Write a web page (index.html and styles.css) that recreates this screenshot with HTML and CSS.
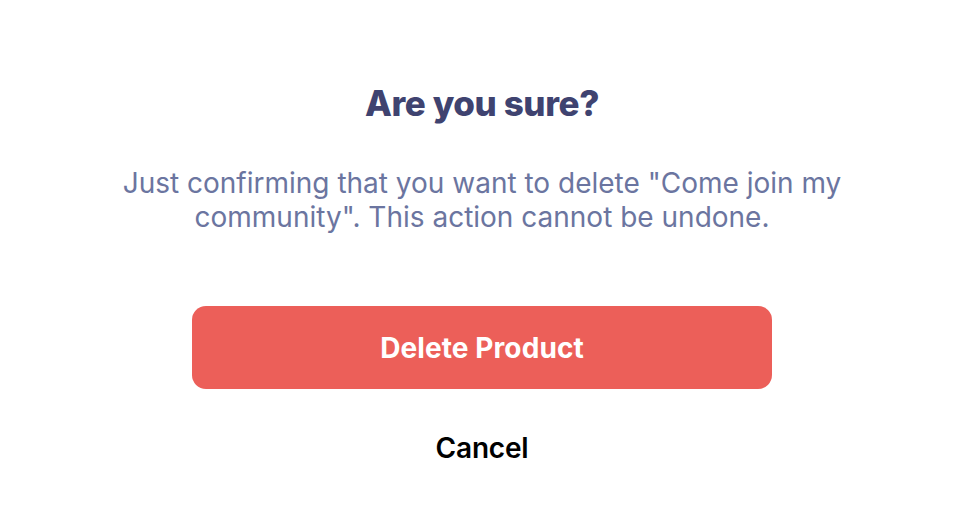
FILE: index.html
```html
<!DOCTYPE html>
<html lang="en">
<head>
<meta charset="UTF-8"><meta name="viewport" content="width=device-width,initial-scale=1">
<title>Delete product</title>
<link rel="stylesheet" href="styles.css">
</head>
<body>
<main class="confirm">
  <h2>Are you sure?</h2>
  <p>Just confirming that you want to delete "Come join my community". This action cannot be undone.</p>
  <button class="delete">Delete Product</button>
  <button class="cancel">Cancel</button>
</main>
</body>
</html>
```

FILE: styles.css
```css
body{margin:0;background:#fff;font-family:Inter,"Noto Sans",sans-serif}
.confirm{display:flex;flex-direction:column;align-items:center;padding-top:80px}
.confirm h2{margin:0;font-size:35px;line-height:46px;font-weight:800;color:#3f4370;letter-spacing:-.4px}
.confirm p{margin:40px 0 0;width:760px;text-align:center;font-size:28px;line-height:34px;color:#6b75a0}
.delete{margin-top:72px;width:580px;height:83px;border:none;border-radius:14px;background:#ec5f59;color:#fff;font:700 28px Inter,sans-serif;letter-spacing:.1px;cursor:pointer}
.cancel{margin-top:42px;border:none;background:none;color:#000;font:600 28px Inter,sans-serif;letter-spacing:-.2px;cursor:pointer;padding:0}
```
